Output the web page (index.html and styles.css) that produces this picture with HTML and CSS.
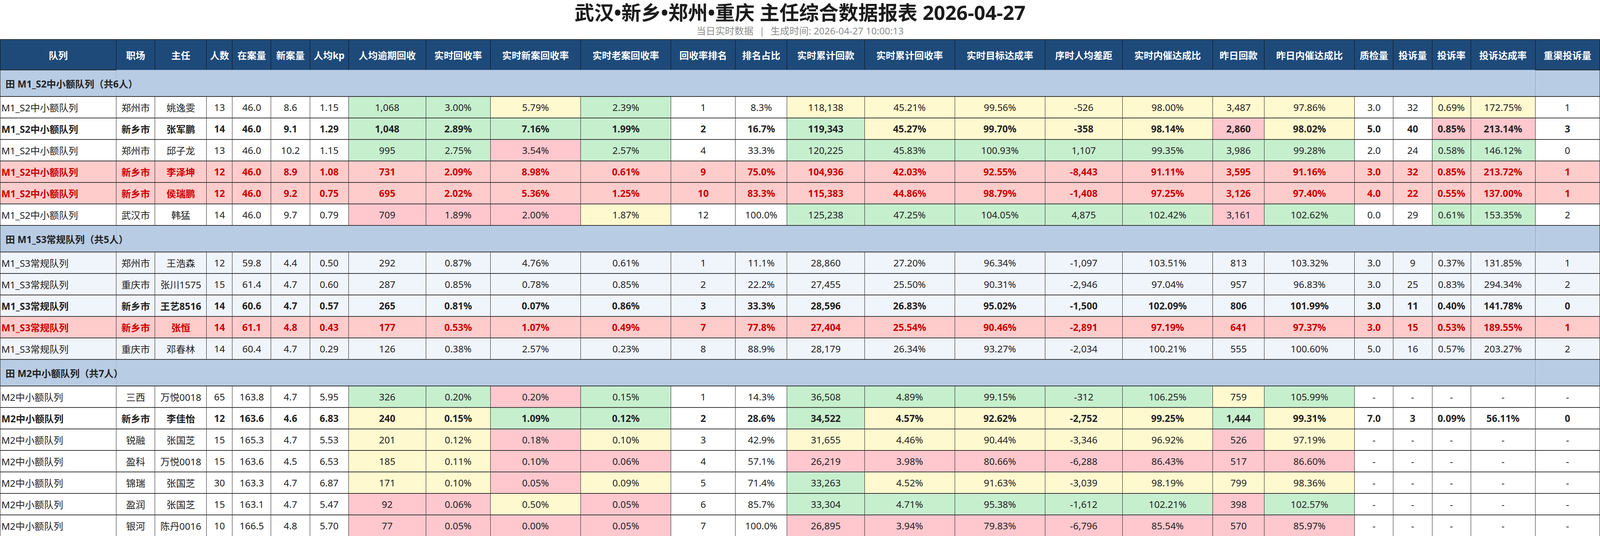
FILE: index.html
```html
<!DOCTYPE html>
<html lang="zh-CN">
<head>
<meta charset="utf-8">
<title>主任综合数据报表</title>
<link rel="stylesheet" href="styles.css">
</head>
<body>
<header class="head">
  <h1 class="title">武汉•新乡•郑州•重庆 主任综合数据报表 2026-04-27</h1>
  <div class="sub">当日实时数据<span class="sep">|</span>生成时间: 2026-04-27 10:00:13</div>
</header>
<table class="report">
  <colgroup>
    <col class="u9"><col class="u3"><col class="u4"><col class="u2"><col class="u3"><col class="u3"><col class="u3">
    <col class="u6"><col class="u5"><col class="u7"><col class="u7"><col class="u5"><col class="u4">
    <col class="u6"><col class="u7"><col class="u7"><col class="u6"><col class="u7"><col class="u4"><col class="u7">
    <col class="u3"><col class="u3"><col class="u3"><col class="u5"><col class="u5">
  </colgroup>
  <thead>
    <tr>
      <th>队列</th><th>职场</th><th>主任</th><th>人数</th><th>在案量</th><th>新案量</th><th>人均kp</th>
      <th>人均逾期回收</th><th>实时回收率</th><th>实时新案回收率</th><th>实时老案回收率</th><th>回收率排名</th><th>排名占比</th>
      <th>实时累计回款</th><th>实时累计回收率</th><th>实时目标达成率</th><th>序时人均差距</th><th>实时内催达成比</th><th>昨日回款</th><th>昨日内催达成比</th>
      <th>质检量</th><th>投诉量</th><th>投诉率</th><th>投诉达成率</th><th>重渠投诉量</th>
    </tr>
  </thead>
  <tbody>
    <tr class="grp"><td class="gname">田 M1_S2中小额队列（共6人）</td><td colspan="23" class="gmid"></td><td class="glast"></td></tr>
    <tr>
      <td class="q">M1_S2中小额队列</td><td>郑州市</td><td>姚逸雯</td><td>13</td><td>46.0</td><td>8.6</td><td>1.15</td>
      <td class="g">1,068</td><td class="g">3.00%</td><td class="y">5.79%</td><td class="g">2.39%</td><td>1</td><td>8.3%</td>
      <td class="y">118,138</td><td class="y">45.21%</td><td class="y">99.56%</td><td class="y">-526</td><td class="y">98.00%</td><td class="y">3,487</td><td class="y">97.86%</td>
      <td>3.0</td><td>32</td><td class="y">0.69%</td><td class="y">172.75%</td><td>1</td>
    </tr>
    <tr class="b">
      <td class="q">M1_S2中小额队列</td><td>新乡市</td><td>张军鹏</td><td>14</td><td>46.0</td><td>9.1</td><td>1.29</td>
      <td class="g">1,048</td><td class="g">2.89%</td><td class="g">7.16%</td><td class="g">1.99%</td><td>2</td><td>16.7%</td>
      <td class="g">119,343</td><td class="y">45.27%</td><td class="y">99.70%</td><td class="y">-358</td><td class="y">98.14%</td><td class="p">2,860</td><td class="y">98.02%</td>
      <td>5.0</td><td>40</td><td class="p">0.85%</td><td class="p">213.14%</td><td>3</td>
    </tr>
    <tr>
      <td class="q">M1_S2中小额队列</td><td>郑州市</td><td>邱子龙</td><td>13</td><td>46.0</td><td>10.2</td><td>1.15</td>
      <td class="g">995</td><td class="g">2.75%</td><td class="p">3.54%</td><td class="g">2.57%</td><td>4</td><td>33.3%</td>
      <td class="g">120,225</td><td class="g">45.83%</td><td class="g">100.93%</td><td class="g">1,107</td><td class="g">99.35%</td><td class="g">3,986</td><td class="g">99.28%</td>
      <td>2.0</td><td>24</td><td class="g">0.58%</td><td class="g">146.12%</td><td>0</td>
    </tr>
    <tr class="r">
      <td class="q">M1_S2中小额队列</td><td>新乡市</td><td>李泽坤</td><td>12</td><td>46.0</td><td>8.9</td><td>1.08</td>
      <td>731</td><td>2.09%</td><td>8.98%</td><td>0.61%</td><td>9</td><td>75.0%</td>
      <td>104,936</td><td>42.03%</td><td>92.55%</td><td>-8,443</td><td>91.11%</td><td>3,595</td><td>91.16%</td>
      <td>3.0</td><td>32</td><td>0.85%</td><td>213.72%</td><td>1</td>
    </tr>
    <tr class="r">
      <td class="q">M1_S2中小额队列</td><td>新乡市</td><td>侯瑞鹏</td><td>12</td><td>46.0</td><td>9.2</td><td>0.75</td>
      <td>695</td><td>2.02%</td><td>5.36%</td><td>1.25%</td><td>10</td><td>83.3%</td>
      <td>115,383</td><td>44.86%</td><td>98.79%</td><td>-1,408</td><td>97.25%</td><td>3,126</td><td>97.40%</td>
      <td>4.0</td><td>22</td><td>0.55%</td><td>137.00%</td><td>1</td>
    </tr>
    <tr>
      <td class="q">M1_S2中小额队列</td><td>武汉市</td><td>韩猛</td><td>14</td><td>46.0</td><td>9.7</td><td>0.79</td>
      <td class="p">709</td><td class="p">1.89%</td><td class="p">2.00%</td><td class="y">1.87%</td><td>12</td><td>100.0%</td>
      <td class="g">125,238</td><td class="g">47.25%</td><td class="g">104.05%</td><td class="g">4,875</td><td class="g">102.42%</td><td class="p">3,161</td><td class="g">102.62%</td>
      <td>0.0</td><td>29</td><td class="g">0.61%</td><td class="g">153.35%</td><td>2</td>
    </tr>

    <tr class="grp"><td class="gname">田 M1_S3常规队列（共5人）</td><td colspan="23" class="gmid"></td><td class="glast"></td></tr>
    <tr class="t">
      <td class="q">M1_S3常规队列</td><td>郑州市</td><td>王浩森</td><td>12</td><td>59.8</td><td>4.4</td><td>0.50</td>
      <td class="g">292</td><td class="g">0.87%</td><td class="g">4.76%</td><td class="y">0.61%</td><td>1</td><td>11.1%</td>
      <td class="g">28,860</td><td class="g">27.20%</td><td class="g">96.34%</td><td class="g">-1,097</td><td class="g">103.51%</td><td class="y">813</td><td class="g">103.32%</td>
      <td>3.0</td><td>9</td><td class="g">0.37%</td><td class="g">131.85%</td><td>1</td>
    </tr>
    <tr class="t">
      <td class="q">M1_S3常规队列</td><td>重庆市</td><td>张川1575</td><td>15</td><td>61.4</td><td>4.7</td><td>0.60</td>
      <td class="g">287</td><td class="g">0.85%</td><td class="p">0.78%</td><td class="g">0.85%</td><td>2</td><td>22.2%</td>
      <td class="p">27,455</td><td class="p">25.50%</td><td class="p">90.31%</td><td class="p">-2,946</td><td class="p">97.04%</td><td class="g">957</td><td class="p">96.83%</td>
      <td>3.0</td><td>25</td><td class="p">0.83%</td><td class="p">294.34%</td><td>2</td>
    </tr>
    <tr class="t b">
      <td class="q">M1_S3常规队列</td><td>新乡市</td><td>王艺8516</td><td>14</td><td>60.6</td><td>4.7</td><td>0.57</td>
      <td class="g">265</td><td class="g">0.81%</td><td class="p">0.07%</td><td class="g">0.86%</td><td>3</td><td>33.3%</td>
      <td class="g">28,596</td><td class="g">26.83%</td><td class="g">95.02%</td><td class="g">-1,500</td><td class="g">102.09%</td><td class="y">806</td><td class="g">101.99%</td>
      <td>3.0</td><td>11</td><td class="g">0.40%</td><td class="g">141.78%</td><td>0</td>
    </tr>
    <tr class="r">
      <td class="q">M1_S3常规队列</td><td>新乡市</td><td>张恒</td><td>14</td><td>61.1</td><td>4.8</td><td>0.43</td>
      <td>177</td><td>0.53%</td><td>1.07%</td><td>0.49%</td><td>7</td><td>77.8%</td>
      <td>27,404</td><td>25.54%</td><td>90.46%</td><td>-2,891</td><td>97.19%</td><td>641</td><td>97.37%</td>
      <td>3.0</td><td>15</td><td>0.53%</td><td>189.55%</td><td>1</td>
    </tr>
    <tr class="t">
      <td class="q">M1_S3常规队列</td><td>重庆市</td><td>邓春林</td><td>14</td><td>60.4</td><td>4.7</td><td>0.29</td>
      <td class="p">126</td><td class="p">0.38%</td><td class="y">2.57%</td><td class="p">0.23%</td><td>8</td><td>88.9%</td>
      <td class="y">28,179</td><td class="y">26.34%</td><td class="y">93.27%</td><td class="y">-2,034</td><td class="y">100.21%</td><td class="p">555</td><td class="y">100.60%</td>
      <td>5.0</td><td>16</td><td class="y">0.57%</td><td class="y">203.27%</td><td>2</td>
    </tr>

    <tr class="grp"><td class="gname">田 M2中小额队列（共7人）</td><td colspan="23" class="gmid"></td><td class="glast"></td></tr>
    <tr>
      <td class="q">M2中小额队列</td><td>三西</td><td>万悦0018</td><td>65</td><td>163.8</td><td>4.7</td><td>5.95</td>
      <td class="g">326</td><td class="g">0.20%</td><td class="p">0.20%</td><td class="g">0.15%</td><td>1</td><td>14.3%</td>
      <td class="g">36,508</td><td class="g">4.89%</td><td class="g">99.15%</td><td class="g">-312</td><td class="g">106.25%</td><td class="y">759</td><td class="g">105.99%</td>
      <td>-</td><td>-</td><td>-</td><td>-</td><td>-</td>
    </tr>
    <tr class="b">
      <td class="q">M2中小额队列</td><td>新乡市</td><td>李佳怡</td><td>12</td><td>163.6</td><td>4.6</td><td>6.83</td>
      <td class="y">240</td><td class="y">0.15%</td><td class="g">1.09%</td><td class="g">0.12%</td><td>2</td><td>28.6%</td>
      <td class="g">34,522</td><td class="y">4.57%</td><td class="y">92.62%</td><td class="y">-2,752</td><td class="y">99.25%</td><td class="g">1,444</td><td class="y">99.31%</td>
      <td>7.0</td><td>3</td><td>0.09%</td><td>56.11%</td><td>0</td>
    </tr>
    <tr>
      <td class="q">M2中小额队列</td><td>锐融</td><td>张国芝</td><td>15</td><td>165.3</td><td>4.7</td><td>5.53</td>
      <td class="y">201</td><td class="y">0.12%</td><td class="p">0.18%</td><td class="y">0.10%</td><td>3</td><td>42.9%</td>
      <td class="y">31,655</td><td class="y">4.46%</td><td class="y">90.44%</td><td class="y">-3,346</td><td class="y">96.92%</td><td class="p">526</td><td class="y">97.19%</td>
      <td>-</td><td>-</td><td>-</td><td>-</td><td>-</td>
    </tr>
    <tr>
      <td class="q">M2中小额队列</td><td>盈科</td><td>万悦0018</td><td>15</td><td>163.6</td><td>4.5</td><td>6.53</td>
      <td class="y">185</td><td class="y">0.11%</td><td class="p">0.10%</td><td class="p">0.06%</td><td>4</td><td>57.1%</td>
      <td class="p">26,219</td><td class="p">3.98%</td><td class="p">80.66%</td><td class="p">-6,288</td><td class="p">86.43%</td><td class="p">517</td><td class="p">86.60%</td>
      <td>-</td><td>-</td><td>-</td><td>-</td><td>-</td>
    </tr>
    <tr>
      <td class="q">M2中小额队列</td><td>锦瑞</td><td>张国芝</td><td>30</td><td>163.3</td><td>4.7</td><td>6.87</td>
      <td class="y">171</td><td class="y">0.10%</td><td class="p">0.05%</td><td class="y">0.09%</td><td>5</td><td>71.4%</td>
      <td class="g">33,263</td><td class="y">4.52%</td><td class="y">91.63%</td><td class="y">-3,039</td><td class="y">98.19%</td><td class="y">799</td><td class="y">98.36%</td>
      <td>-</td><td>-</td><td>-</td><td>-</td><td>-</td>
    </tr>
    <tr>
      <td class="q">M2中小额队列</td><td>盈润</td><td>张国芝</td><td>15</td><td>163.1</td><td>4.7</td><td>5.47</td>
      <td class="p">92</td><td class="p">0.06%</td><td class="y">0.50%</td><td class="p">0.05%</td><td>6</td><td>85.7%</td>
      <td class="g">33,304</td><td class="g">4.71%</td><td class="g">95.38%</td><td class="g">-1,612</td><td class="g">102.21%</td><td class="p">398</td><td class="g">102.57%</td>
      <td>-</td><td>-</td><td>-</td><td>-</td><td>-</td>
    </tr>
    <tr>
      <td class="q">M2中小额队列</td><td>银河</td><td>陈丹0016</td><td>10</td><td>166.5</td><td>4.8</td><td>5.70</td>
      <td class="p">77</td><td class="p">0.05%</td><td class="p">0.00%</td><td class="p">0.05%</td><td>7</td><td>100.0%</td>
      <td class="p">26,895</td><td class="p">3.94%</td><td class="p">79.83%</td><td class="p">-6,796</td><td class="p">85.54%</td><td class="p">570</td><td class="p">85.97%</td>
      <td>-</td><td>-</td><td>-</td><td>-</td><td>-</td>
    </tr>
  </tbody>
</table>
</body>
</html>
```

FILE: styles.css
```css
html, body {
  margin: 0;
  padding: 0;
  background: #ffffff;
}

body {
  font-family: "Noto Sans", "Noto Sans CJK SC", sans-serif;
  color: #222222;
}

.head {
  height: 100px;
  text-align: center;
}

.title {
  margin: 0;
  font-size: 50.5px;
  font-weight: 700;
  line-height: 64px;
  color: #1b1b1b;
}

.sub {
  font-size: 24.4px;
  line-height: 30px;
  color: #8c8c8c;
}

.sep {
  margin: 0 15px;
}

.report {
  width: 100%;
  table-layout: fixed;
  border-collapse: collapse;
  font-size: 24.4px;
}

.u2 { width: 1.6129%; }
.u3 { width: 2.41935%; }
.u4 { width: 3.22581%; }
.u5 { width: 4.03226%; }
.u6 { width: 4.83871%; }
.u7 { width: 5.64516%; }
.u9 { width: 7.25806%; }

.report th {
  background: #1e4a7a;
  color: #ffffff;
  font-weight: 700;
  height: 76px;
  padding: 0;
  text-align: center;
  white-space: nowrap;
  border-top: 2px solid #3c3c3c;
  border-left: 1px solid #111111;
  border-right: 1px solid #111111;
  border-bottom: none;
}

.report td {
  height: 53px;
  padding: 0;
  text-align: center;
  white-space: nowrap;
  border-left: 1px solid #1f1f1f;
  border-right: 1px solid #1f1f1f;
  border-bottom: 2px solid #3a3a3a;
  background: #ffffff;
}

.report td.q {
  text-align: left;
  padding-left: 2.5px;
  overflow: hidden;
}

.report tr.t td { background: #f0f4fb; }
.report tr.b td { font-weight: 700; }
.report tr.r td {
  background: #ffcccc;
  color: #cc0000;
  font-weight: 700;
}

.report td.g { background: #c6efce; }
.report td.y { background: #fff9cf; }
.report td.p { background: #ffc7ce; }

.report tr.grp td {
  height: 66px;
  background: #b8cce4;
  border-left: none;
  border-right: none;
  border-bottom: 2px solid #333333;
}

.report tr.grp td.gname {
  text-align: left;
  padding-left: 13px;
  font-weight: 700;
  overflow: visible;
  border-top: 2px solid #2a2a2a;
  border-left: 1px solid #2a2a2a;
}

.report tr.grp td.gmid {
  border-left: 1px solid #9fb4cf;
}

.report tr.grp td.glast {
  border-top: 2px solid #2a2a2a;
  border-left: 1px solid #8aa0bc;
  border-right: 1px solid #2a2a2a;
}
```
